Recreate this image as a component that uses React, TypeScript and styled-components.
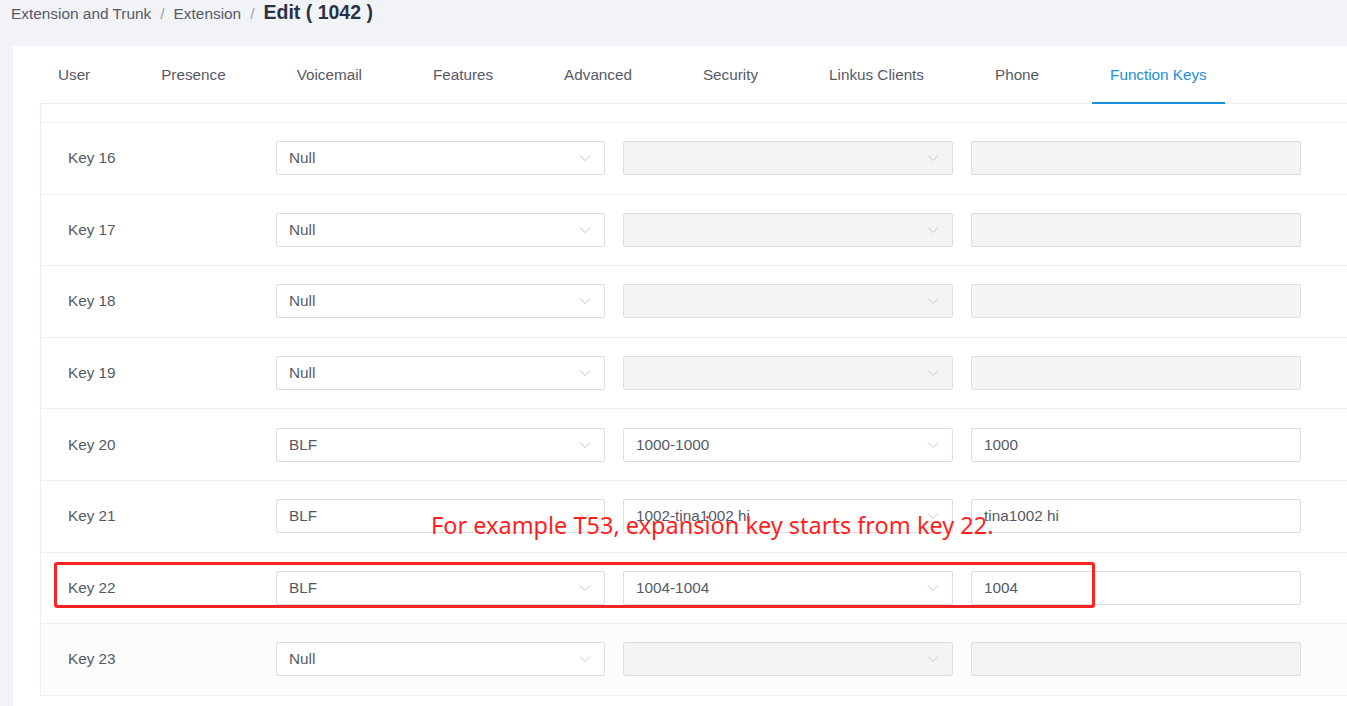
import React from "react";
import styled, { createGlobalStyle } from "styled-components";

const Global = createGlobalStyle`
  html, body { margin: 0; padding: 0; }
  body {
    background: #f2f3f7;
    font-family: "Liberation Sans", Arial, sans-serif;
    overflow: hidden;
    width: 1347px;
    height: 706px;
  }
`;

const Page = styled.div`
  position: relative;
  width: 1347px;
  height: 706px;
  overflow: hidden;
`;

const Breadcrumb = styled.div`
  display: flex;
  align-items: baseline;
  height: 28px;
  padding: 1px 0 0 11px;
  box-sizing: border-box;
  font-size: 15.4px;
  color: #555a66;
`;

const Crumb = styled.span``;

const Sep = styled.span`
  color: #9aa0ab;
  margin: 0 9px;
`;

const Current = styled.span`
  font-size: 19.5px;
  font-weight: bold;
  color: #2a3346;
`;

const Card = styled.div`
  margin: 18px 0 0 13px;
  width: 1400px;
  height: 700px;
  background: #fff;
  padding-left: 27px;
  box-sizing: border-box;
`;

const TabBar = styled.div`
  display: flex;
  gap: 35px;
  height: 57px;
  border-bottom: 1px solid #eceef3;
`;

const Tab = styled.div<{ $active?: boolean }>`
  padding: 0 18px;
  display: flex;
  align-items: center;
  font-size: 15.25px;
  color: ${(p) => (p.$active ? "#1a8fdd" : "#555a66")};
  border-bottom: 2px solid ${(p) => (p.$active ? "#1a8fdd" : "transparent")};
  margin-bottom: -1px;
  padding-top: 0;
  box-sizing: border-box;
`;

const Table = styled.div`
  border-left: 1px solid #eceef3;
`;

const Spacer = styled.div`
  height: 18px;
  border-bottom: 1px solid #eceef3;
`;

const Row = styled.div<{ $hover?: boolean }>`
  display: grid;
  grid-template-columns: 217px 329px 330px 330px 1fr;
  column-gap: 18px;
  align-items: center;
  height: 70.6px;
  border-bottom: 1px solid #eceef3;
  background: ${(p) => (p.$hover ? "#fcfcfd" : "#fff")};
`;

const Label = styled.div`
  padding-left: 27px;
  font-size: 15.3px;
  color: #555a66;
`;

const Field = styled.div<{ $disabled?: boolean }>`
  position: relative;
  height: 34px;
  box-sizing: border-box;
  border: 1px solid #dcdde6;
  border-radius: 2px;
  background: ${(p) => (p.$disabled ? "#f4f4f5" : "#fff")};
  display: flex;
  align-items: center;
  padding: 0 12px;
  font-size: 15.3px;
  color: #555a66;
`;

const Chevron = styled.svg`
  position: absolute;
  right: 13px;
  top: 11px;
`;

const Note = styled.div`
  position: absolute;
  left: 431px;
  top: 509px;
  font-family: "Noto Sans", "Open Sans", sans-serif;
  font-size: 23.5px;
  color: #ff1f1f;
  white-space: nowrap;
`;

const Highlight = styled.div`
  position: absolute;
  left: 54px;
  top: 562px;
  width: 1041px;
  height: 46px;
  box-sizing: border-box;
  border: 3px solid #ff2222;
  border-radius: 3px;
`;

const Arrow = () => (
  <Chevron width="12" height="10" viewBox="0 0 12 10">
    <path d="M1 2.5 L6 7.5 L11 2.5" fill="none" stroke="#c3c6ce" strokeWidth="1" />
  </Chevron>
);

type RowData = { key: number; type: string; target?: string; label?: string };

const rows: RowData[] = [
  { key: 16, type: "Null" },
  { key: 17, type: "Null" },
  { key: 18, type: "Null" },
  { key: 19, type: "Null" },
  { key: 20, type: "BLF", target: "1000-1000", label: "1000" },
  { key: 21, type: "BLF", target: "1002-tina1002 hi", label: "tina1002 hi" },
  { key: 22, type: "BLF", target: "1004-1004", label: "1004" },
  { key: 23, type: "Null" },
];

const tabs = [
  "User",
  "Presence",
  "Voicemail",
  "Features",
  "Advanced",
  "Security",
  "Linkus Clients",
  "Phone",
  "Function Keys",
];

export default function App() {
  return (
    <Page>
      <Global />
      <Breadcrumb>
        <Crumb>Extension and Trunk</Crumb>
        <Sep>/</Sep>
        <Crumb>Extension</Crumb>
        <Sep>/</Sep>
        <Current>Edit ( 1042 )</Current>
      </Breadcrumb>
      <Card>
        <TabBar>
          {tabs.map((t) => (
            <Tab key={t} $active={t === "Function Keys"}>
              {t}
            </Tab>
          ))}
        </TabBar>
        <Table>
          <Spacer />
          {rows.map((r) => {
            const disabled = r.type === "Null";
            return (
              <Row key={r.key} $hover={r.key === 23}>
                <Label>Key {r.key}</Label>
                <Field>
                  {r.type}
                  <Arrow />
                </Field>
                <Field $disabled={disabled}>
                  {r.target}
                  <Arrow />
                </Field>
                <Field $disabled={disabled}>{r.label}</Field>
                <div />
              </Row>
            );
          })}
        </Table>
      </Card>
      <Note>For example T53, expansion key starts from key 22.</Note>
      <Highlight />
    </Page>
  );
}
